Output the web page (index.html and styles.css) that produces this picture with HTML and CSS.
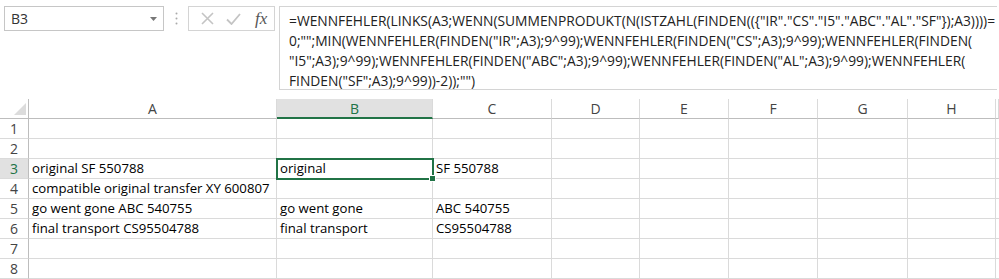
FILE: index.html
```html
<!DOCTYPE html>
<html lang="de">
<head>
  <meta charset="UTF-8">
  <title>Mappe1 - Excel</title>
  <link rel="stylesheet" href="styles.css">
</head>
<body>

  <div class="bar">
    <div class="namebox">
      <span>B3</span>
      <svg class="drop" width="7" height="4" viewBox="0 0 7 4"><path d="M0 0h7L3.5 4z" fill="#777"/></svg>
    </div>
    <div class="grip">
      <svg width="3" height="13" viewBox="0 0 3 13"><circle cx="1.5" cy="1.5" r="1" fill="#aaa"/><circle cx="1.5" cy="6.5" r="1" fill="#aaa"/><circle cx="1.5" cy="11.5" r="1" fill="#aaa"/></svg>
    </div>
    <div class="fxbox">
      <svg width="13" height="13" viewBox="0 0 13 13"><path d="M1 1l11 11M12 1L1 12" stroke="#c4c4c4" stroke-width="1.6" fill="none"/></svg>
      <svg width="15" height="12" viewBox="0 0 15 12"><path d="M1 6.5l4.5 4.5L14 1" stroke="#c4c4c4" stroke-width="1.8" fill="none"/></svg>
      <span class="fx">fx</span>
    </div>
    <div class="formula">=WENNFEHLER(LINKS(A3;WENN(SUMMENPRODUKT(N(ISTZAHL(FINDEN(({"IR"."CS"."I5"."ABC"."AL"."SF"});A3))))=<br>0;"";MIN(WENNFEHLER(FINDEN("IR";A3);9^99);WENNFEHLER(FINDEN("CS";A3);9^99);WENNFEHLER(FINDEN(<br>"I5";A3);9^99);WENNFEHLER(FINDEN("ABC";A3);9^99);WENNFEHLER(FINDEN("AL";A3);9^99);WENNFEHLER(<br>FINDEN("SF";A3);9^99))-2));"")</div>
  </div>

  <div class="sheet">
    <div class="corner"><span class="tri"></span></div>
    <div class="colhead">A</div>
    <div class="colhead active">B</div>
    <div class="colhead">C</div>
    <div class="colhead">D</div>
    <div class="colhead">E</div>
    <div class="colhead">F</div>
    <div class="colhead">G</div>
    <div class="colhead">H</div>
    <div class="colhead"></div>

    <div class="rowhead">1</div>
    <div class="cell"></div><div class="cell"></div><div class="cell"></div><div class="cell"></div><div class="cell"></div><div class="cell"></div><div class="cell"></div><div class="cell"></div><div class="cell"></div>

    <div class="rowhead">2</div>
    <div class="cell"></div><div class="cell"></div><div class="cell"></div><div class="cell"></div><div class="cell"></div><div class="cell"></div><div class="cell"></div><div class="cell"></div><div class="cell"></div>

    <div class="rowhead active">3</div>
    <div class="cell">original SF 550788</div>
    <div class="cell selected">original<span class="handle"></span></div>
    <div class="cell">SF 550788</div>
    <div class="cell"></div><div class="cell"></div><div class="cell"></div><div class="cell"></div><div class="cell"></div><div class="cell"></div>

    <div class="rowhead">4</div>
    <div class="cell">compatible original transfer XY 600807</div>
    <div class="cell"></div><div class="cell"></div><div class="cell"></div><div class="cell"></div><div class="cell"></div><div class="cell"></div><div class="cell"></div><div class="cell"></div>

    <div class="rowhead">5</div>
    <div class="cell">go went gone ABC 540755</div>
    <div class="cell">go went gone</div>
    <div class="cell">ABC 540755</div>
    <div class="cell"></div><div class="cell"></div><div class="cell"></div><div class="cell"></div><div class="cell"></div><div class="cell"></div>

    <div class="rowhead">6</div>
    <div class="cell">final transport CS95504788</div>
    <div class="cell">final transport</div>
    <div class="cell">CS95504788</div>
    <div class="cell"></div><div class="cell"></div><div class="cell"></div><div class="cell"></div><div class="cell"></div><div class="cell"></div>

    <div class="rowhead">7</div>
    <div class="cell"></div><div class="cell"></div><div class="cell"></div><div class="cell"></div><div class="cell"></div><div class="cell"></div><div class="cell"></div><div class="cell"></div><div class="cell"></div>

    <div class="rowhead">8</div>
    <div class="cell"></div><div class="cell"></div><div class="cell"></div><div class="cell"></div><div class="cell"></div><div class="cell"></div><div class="cell"></div><div class="cell"></div><div class="cell"></div>
  </div>

</body>
</html>
```

FILE: styles.css
```css
body {
  margin: 0;
  background: #fff;
  font-family: "Open Sans", "Noto Sans", sans-serif;
  color: #222;
  overflow: hidden;
}

.bar {
  display: flex;
  align-items: flex-start;
  height: 99px;
  box-sizing: border-box;
  padding: 6px 0 0 4px;
}

.namebox {
  width: 160px;
  height: 25px;
  box-sizing: border-box;
  border: 1px solid #c6c6c6;
  display: flex;
  align-items: center;
  justify-content: space-between;
  padding: 0 6px 0 6px;
  font-size: 14px;
  color: #333;
}

.grip {
  width: 24px;
  height: 25px;
  display: flex;
  align-items: center;
  justify-content: center;
}

.fxbox {
  width: 87px;
  height: 25px;
  box-sizing: border-box;
  border: 1px solid #d4d4d4;
  display: flex;
  align-items: center;
  gap: 12px;
  padding-left: 12px;
}

.fx {
  font-family: "Liberation Serif", serif;
  font-style: italic;
  font-size: 17px;
  color: #555;
  margin-left: 2px;
}

.formula {
  margin-left: 4px;
  width: 718px;
  height: 84px;
  box-sizing: border-box;
  border: 1px solid #d4d4d4;
  border-right: none;
  padding: 4px 0 0 9px;
  font-size: 13.8px;
  line-height: 20px;
  color: #222;
  white-space: nowrap;
  overflow: hidden;
}

.sheet {
  display: grid;
  grid-template-columns: 29px 248px 156px 119px 88px 89px 89px 90px 88px 3px;
  grid-auto-rows: 20px;
  font-size: 14px;
}

.corner {
  position: relative;
  border-right: 1px solid #bdbdbd;
  border-bottom: 1px solid #bdbdbd;
}

.tri {
  position: absolute;
  right: 2px;
  bottom: 3px;
  width: 0;
  height: 0;
  border-left: 12px solid transparent;
  border-bottom: 12px solid #dcdcdc;
}

.colhead {
  border-right: 1px solid #dadada;
  border-bottom: 1px solid #bdbdbd;
  text-align: center;
  line-height: 19px;
  color: #444;
}

.colhead.active {
  background: #e1e1e1;
  color: #217346;
  border-bottom: 2px solid #217346;
}

.rowhead {
  border-right: 1px solid #bdbdbd;
  border-bottom: 1px solid #dadada;
  text-align: center;
  line-height: 19px;
  color: #444;
}

.rowhead.active {
  background: #e1e1e1;
  color: #217346;
}

.cell {
  position: relative;
  border-right: 1px solid #dadada;
  border-bottom: 1px solid #dadada;
  padding-left: 3px;
  line-height: 19px;
  white-space: nowrap;
  font-size: 13.2px;
  color: #000;
}

.cell.selected {
  outline: 2px solid #217346;
  outline-offset: -1px;
  z-index: 2;
}

.handle {
  position: absolute;
  right: -4px;
  bottom: -4px;
  width: 5px;
  height: 5px;
  background: #217346;
  border: 1px solid #fff;
}
```
